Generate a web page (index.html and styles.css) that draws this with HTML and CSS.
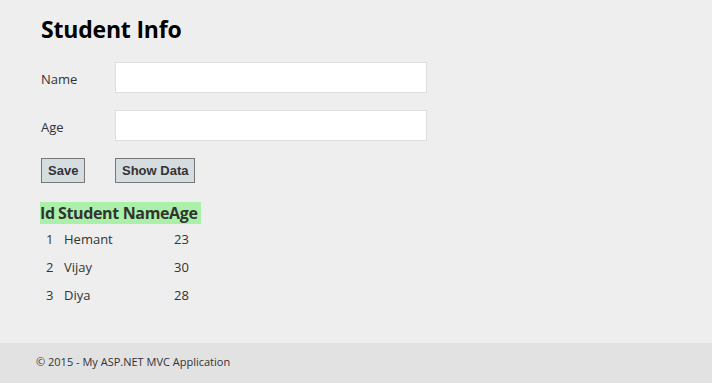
FILE: index.html
```html
<!DOCTYPE html>
<html>
<head>
<meta charset="utf-8">
<link rel="stylesheet" href="styles.css">
</head>
<body>
<div class="page">
  <h2 class="title">Student Info</h2>
  <div class="form">
    <label class="lbl">Name</label>
    <input class="field" type="text">
    <label class="lbl">Age</label>
    <input class="field" type="text">
    <div class="btn-cell"><button class="btn">Save</button></div>
    <div class="btn-cell"><button class="btn">Show Data</button></div>
  </div>
  <table class="grid">
    <colgroup><col class="c1"><col class="c2"><col class="c3"></colgroup>
    <thead>
      <tr><th>Id</th><th>Student Name</th><th>Age</th></tr>
    </thead>
    <tbody>
      <tr><td>1</td><td>Hemant</td><td>23</td></tr>
      <tr><td>2</td><td>Vijay</td><td>30</td></tr>
      <tr><td>3</td><td>Diya</td><td>28</td></tr>
    </tbody>
  </table>
</div>
<footer class="footer">
  <p>&copy; 2015 - My ASP.NET MVC Application</p>
</footer>
</body>
</html>
```
FILE: styles.css
```css
html, body {
  margin: 0;
  padding: 0;
  background: #eeeeee;
  font-family: "Open Sans", "Noto Sans", sans-serif;
  color: #333;
}
.page {
  height: 343px;
  box-sizing: border-box;
  padding: 14px 0 0 40px;
}
.title {
  margin: 0 0 0 1px;
  font-size: 23px;
  line-height: 30px;
  font-weight: 700;
  color: #000;
  letter-spacing: -0.2px;
}
.form {
  margin: 18px 0 0 1px;
  display: grid;
  grid-template-columns: 74px 312px;
  grid-auto-rows: 31px;
  row-gap: 17px;
  align-items: center;
}
.lbl {
  font-size: 13px;
  line-height: 18px;
  padding-top: 2px;
  color: #333;
}
.field {
  box-sizing: border-box;
  width: 312px;
  height: 31px;
  margin: 0;
  border: 1px solid #dedede;
  background: #fff;
  outline: none;
}
.btn-cell {
  align-self: start;
}
.btn {
  margin: 0;
  height: 25px;
  padding: 0 6px;
  font-family: "Liberation Sans", Arial, sans-serif;
  font-weight: 700;
  font-size: 13px;
  color: #333;
  background: #d6dde1;
  border: 1px solid #767676;
  border-radius: 0;
}
.grid {
  margin-top: 13px;
  border-collapse: collapse;
  table-layout: fixed;
  width: 161px;
}
.c1 { width: 18px; }
.c2 { width: 111px; }
.c3 { width: 32px; }
.grid th {
  padding: 0;
  height: 22px;
  background: #abf0a8;
  font-size: 16px;
  font-weight: 700;
  color: #333;
  text-align: left;
  white-space: nowrap;
  letter-spacing: -0.35px;
}
.grid td {
  height: 28px;
  padding: 2px 0 0 6px;
  box-sizing: border-box;
  font-size: 13px;
  color: #333;
  white-space: nowrap;
}
.grid td:last-child {
  padding-left: 5px;
}
.footer {
  height: 40px;
  background: #e2e2e2;
  box-sizing: border-box;
  padding: 11px 0 0 36px;
}
.footer p {
  margin: 0;
  font-size: 11px;
  line-height: 16px;
  color: #333;
}
```
